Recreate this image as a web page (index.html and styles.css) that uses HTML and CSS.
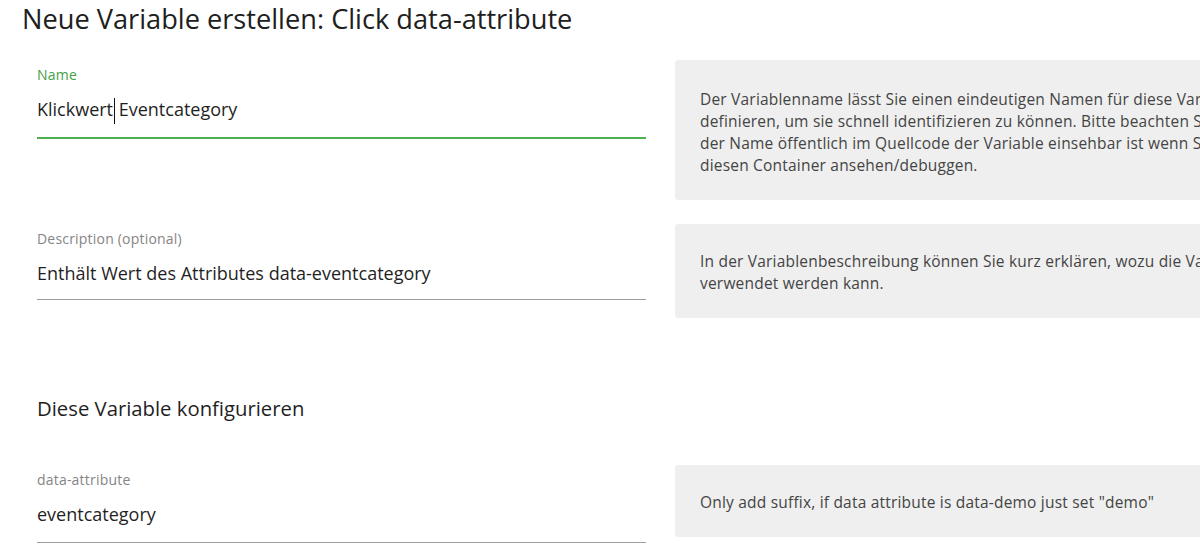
FILE: index.html
```html
<!DOCTYPE html>
<html lang="de">
<head>
<meta charset="utf-8">
<title>Neue Variable erstellen</title>
<link rel="stylesheet" href="styles.css">
</head>
<body>
<div class="page">
  <h1 class="title">Neue Variable erstellen: Click data-attribute</h1>

  <div class="row row-name">
    <div class="field">
      <div class="label label-active">Name</div>
      <div class="input input-active">Klickwert<span class="caret"></span> Eventcategory</div>
    </div>
    <div class="help help-tall">
      <span class="line">Der Variablenname lässt Sie einen eindeutigen Namen für diese Variable</span>
      <span class="line">definieren, um sie schnell identifizieren zu können. Bitte beachten Sie, dass</span>
      <span class="line">der Name öffentlich im Quellcode der Variable einsehbar ist wenn Sie</span>
      <span class="line">diesen Container ansehen/debuggen.</span>
    </div>
  </div>

  <div class="row row-desc">
    <div class="field">
      <div class="label">Description (optional)</div>
      <div class="input input-short">Enthält Wert des Attributes data-eventcategory</div>
    </div>
    <div class="help">
      <span class="line">In der Variablenbeschreibung können Sie kurz erklären, wozu die Variable</span>
      <span class="line">verwendet werden kann.</span>
    </div>
  </div>

  <h2 class="section">Diese Variable konfigurieren</h2>

  <div class="row row-attr">
    <div class="field">
      <div class="label">data-attribute</div>
      <div class="input">eventcategory</div>
    </div>
    <div class="help">
      <span class="line">Only add suffix, if data attribute is data-demo just set "demo"</span>
    </div>
  </div>
</div>
</body>
</html>
```

FILE: styles.css
```css
html, body {
  margin: 0;
  padding: 0;
  background: #ffffff;
  overflow: hidden;
}

body {
  font-family: "Open Sans", "Noto Sans", "Liberation Sans", sans-serif;
  color: #212121;
}

.page {
  width: 1300px;
}

.title {
  margin: 0;
  padding-left: 22px;
  font-size: 27.2px;
  font-weight: 400;
  line-height: 38px;
  color: #202020;
}

.row {
  display: grid;
  grid-template-columns: 609px 560px;
  column-gap: 29px;
  align-items: start;
  padding-left: 37px;
}

.row-name {
  margin-top: 22px;
}

.row-desc {
  margin-top: 24px;
}

.row-attr {
  margin-top: 43px;
}

.field {
  padding-top: 6px;
}

.label {
  font-size: 14px;
  line-height: 18px;
  letter-spacing: 0.2px;
  color: #858585;
}

.label-active {
  color: #43a047;
}

.input {
  margin-top: 10px;
  font-size: 18px;
  line-height: 30px;
  padding-bottom: 13px;
  border-bottom: 1px solid #9e9e9e;
  color: #1f1f1f;
  white-space: nowrap;
}

.input-active {
  border-bottom: 2px solid #4caf50;
}

.input-short {
  padding-bottom: 11px;
}

.caret {
  display: inline-block;
  width: 1px;
  height: 26px;
  background: #111111;
  vertical-align: middle;
  margin-left: 1px;
  margin-right: -1px;
}

.help {
  background: #efefef;
  border-radius: 3px;
  padding: 26px 25px 24px;
  font-size: 15.5px;
  letter-spacing: 0.2px;
  line-height: 22px;
  color: #444444;
}

.help-tall {
  padding-top: 28px;
}

.line {
  display: block;
  white-space: nowrap;
}

.section {
  margin: 76px 0 0;
  padding-left: 37px;
  font-size: 20.3px;
  font-weight: 400;
  line-height: 28px;
  color: #1f1f1f;
}
```
